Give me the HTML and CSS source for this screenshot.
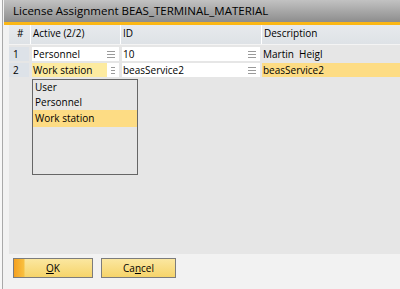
FILE: index.html
```
<!DOCTYPE html>
<html>
	<head>
		<meta charset="UTF-8">
		<title>License Assignment</title>
		<link rel="stylesheet" href="styles.css">
	</head>
	<body>
		<div class="frame">
			<div class="window">
				<div class="titlebar">License Assignment BEAS_TERMINAL_MATERIAL</div>

				<div class="matrix">
					<div class="head">
						<div class="hc num">#</div>
						<div class="hc">Active (2/2)</div>
						<div class="hc">ID</div>
						<div class="hc">Description</div>
					</div>

					<div class="row">
						<div class="rn">1</div>
						<div class="cell edit">
							<span>Personnel</span>
							<i class="burger"></i>
						</div>
						<div class="cell edit">
							<span>10</span>
							<i class="burger"></i>
						</div>
						<div class="cell plain">Martin&nbsp; Heigl</div>
					</div>

					<div class="row">
						<div class="rn">2</div>
						<div class="cell edit combo">
							<span class="sel">Work station</span>
							<i class="burger"></i>
							<!-- open dropdown of the Active column -->
							<ul class="dropdown">
								<li>User</li>
								<li>Personnel</li>
								<li class="hot">Work station</li>
							</ul>
						</div>
						<div class="cell edit">
							<span>beasService2</span>
							<i class="burger"></i>
						</div>
						<div class="cell plain current">beasService2</div>
					</div>
				</div>

				<div class="buttons">
					<button class="btn default"><u>O</u>K</button>
					<button class="btn">Ca<u>n</u>cel</button>
				</div>
			</div>
		</div>
	</body>
</html>
```

FILE: styles.css
```
body{
	margin: 0;
	background-color: #f2f2f2;
	font-family: "Open Sans", "Liberation Sans", sans-serif;
	font-size: 10px;
	color: #000;
	overflow: hidden;
}
.frame{
	width: 400px;
	height: 289px;
	padding-left: 2px;
	box-sizing: border-box;
	background-color: #f7f7f7;
}
.window{
	height: 100%;
	border-left: 1px solid #a9a9a9;
	display: flex;
	flex-direction: column;
	background-color: #f2f2f2;
}
.titlebar{
	height: 22px;
	margin-left: 1px;
	padding-left: 9px;
	line-height: 22px;
	font-size: 11.5px;
	background: linear-gradient(#c2c2c2, #8d8d8d);
	border-bottom: 3px solid #fbb715;
}
.matrix{
	margin-left: 6px;
	height: 229px;
	background-color: #e6e6e6;
}
.head, .row{
	display: grid;
	grid-template-columns: 21px 89px 140px 1fr;
	column-gap: 1px;
}
.head{
	height: 20px;
	box-sizing: border-box;
	background-color: #fff;
	border-bottom: 1px solid #f4f4f4;
}
.hc{
	padding-left: 2px;
	line-height: 17px;
	background: linear-gradient(#e7eaed, #dee2e6);
}
.hc.num{
	padding-left: 8px;
}
.row{
	height: 14px;
	margin-top: 2px;
}
.rn{
	margin-right: 1px;
	padding-left: 4px;
	line-height: 14px;
	background-color: #dde2e8;
}
.cell{
	position: relative;
	line-height: 14px;
	padding-left: 1px;
}
.edit{
	display: flex;
	background-color: #fff;
	margin-left: 1px;
	margin-right: 1px;
}
.edit span{
	flex: 1;
}
.combo .sel{
	flex: 0 0 74px;
	padding-left: 1px;
	margin-left: -1px;
	background-color: #fdeba0;
}
.burger{
	width: 8px;
	height: 5px;
	margin: 4px 4px 0 4px;
	border-top: 1px solid #9a9a9a;
	border-bottom: 1px solid #9a9a9a;
	background: linear-gradient(transparent 2px, #9a9a9a 2px, #9a9a9a 3px, transparent 3px);
}
.plain{
	padding-left: 1px;
}
.current{
	background-color: #fddc84;
}
.dropdown{
	position: absolute;
	left: 0;
	top: 16px;
	width: 104px;
	height: 94px;
	margin: 0;
	padding: 0;
	list-style: none;
	background-color: #e6e6e6;
	border: 1px solid #666;
	z-index: 2;
}
.dropdown li{
	height: 15px;
	line-height: 15px;
	padding-left: 2px;
}
.dropdown li.hot{
	height: 17px;
	line-height: 17px;
	background-color: #fddc84;
}
.buttons{
	display: flex;
	gap: 8px;
	padding: 4px 0 0 10px;
}
.btn{
	width: 80px;
	height: 20px;
	padding: 0;
	font-family: inherit;
	font-size: 10px;
	color: #000;
	border: 1px solid #7c7c7c;
	background: linear-gradient(#fbe7a0, #f6d46a);
}
.btn + .btn{
	width: 75px;
}
.btn.default{
	background: linear-gradient(90deg, #f5a020 0, #f8c040 10px, transparent 11px), linear-gradient(#fbe7a0, #f6d46a);
}
```
